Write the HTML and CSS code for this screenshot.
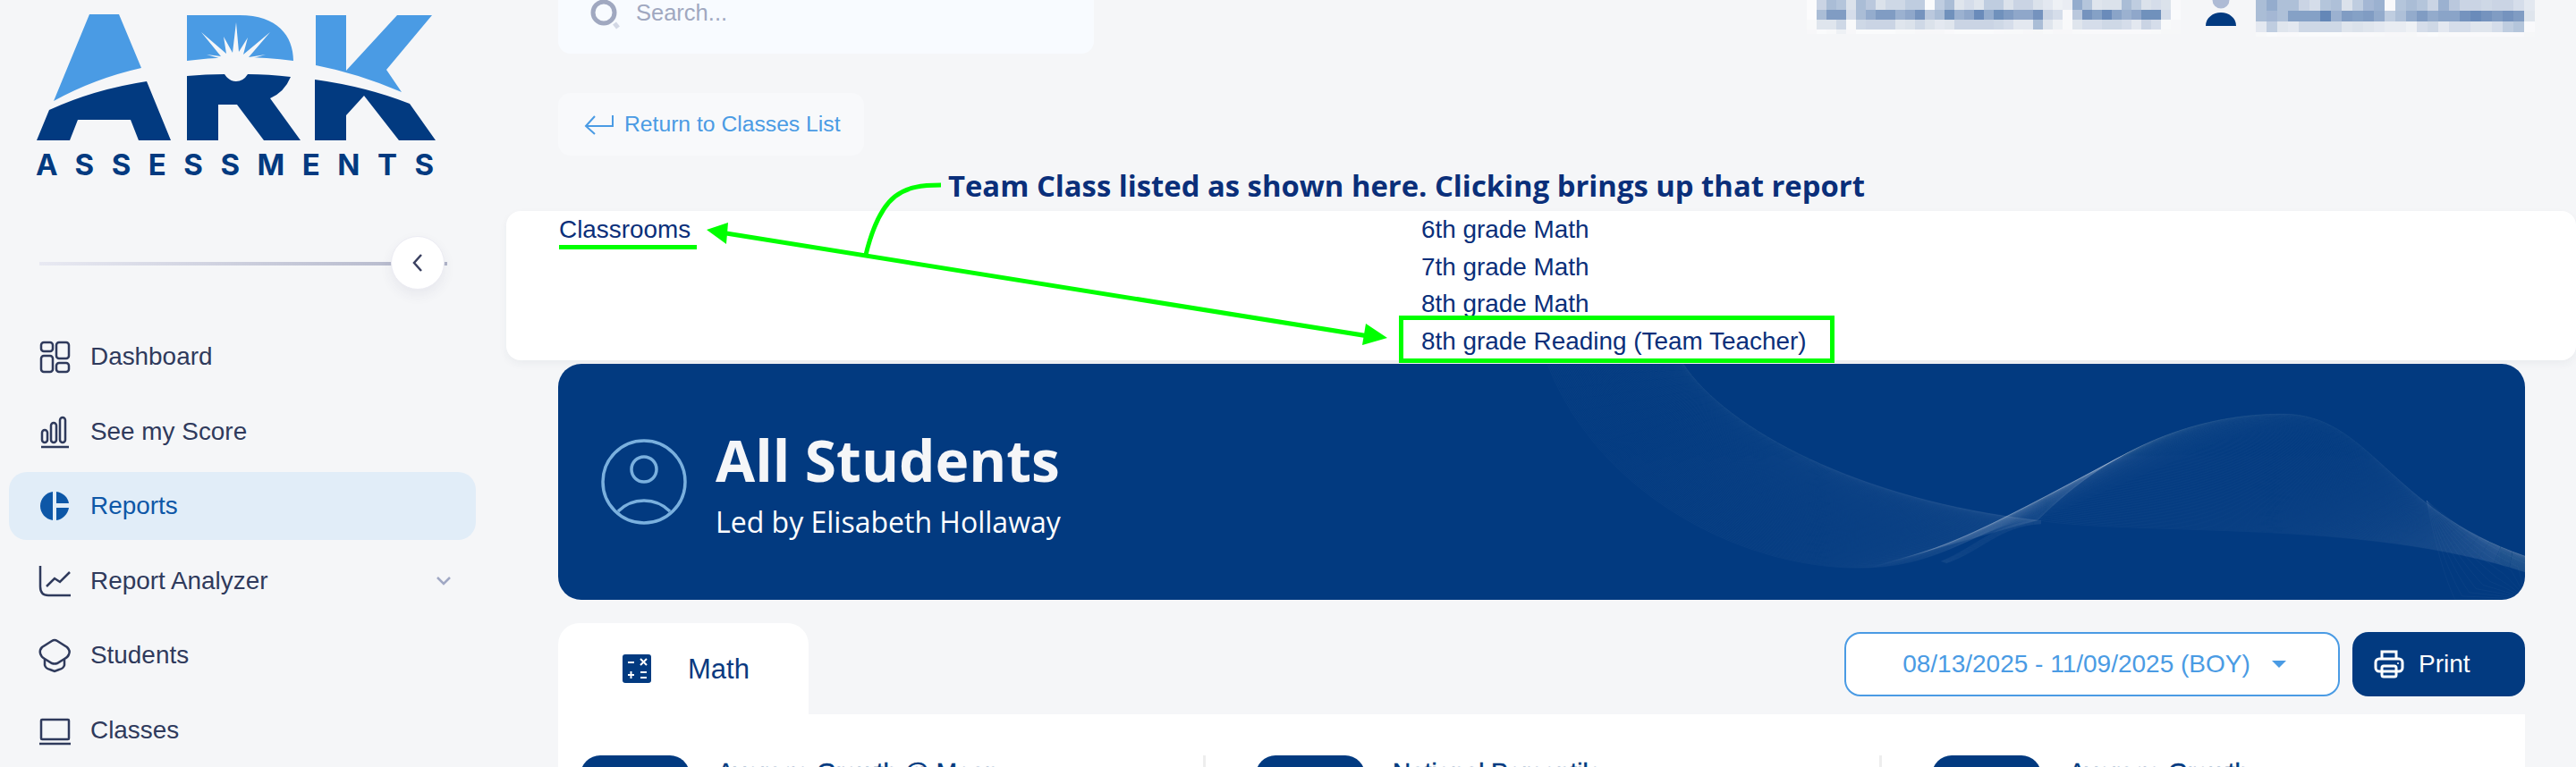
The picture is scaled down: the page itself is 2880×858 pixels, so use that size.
FILE: index.html
```html
<!DOCTYPE html>
<html lang="en">
<head>
<meta charset="utf-8">
<title>ARK Assessments - All Students</title>
<link rel="stylesheet" href="styles.css">
</head>
<body>
<div class="app">
  <aside class="sidebar">
    <svg class="logo" viewBox="0 0 500 200" width="500" height="200" role="img" aria-label="ARK Assessments">
      <g class="logo-light">
        <path d="M100 16H133L158 76Q105 88 60 113Z"/>
        <path d="M209 17H268C310 17 328 40 328 68Q268 60 209 68Z"/>
        <path d="M353 17H387V79L444 17H483L432 78L449 103Q400 82 353 73Z"/>
      </g>
      <path class="logo-rays" d="M264 25L267 58L277 42L272 61L302 36L278 64L297 61L280 66H248L231 61L247 63L225 36L253 60L250 41L260 59Z"/>
      <g class="logo-dark">
        <path d="M164 91L191 157H155L146 134H87L78 157H41L55 123Q105 100 164 91Z"/>
        <path d="M209 85Q230 83 251 83Q256 91 264 91Q272 91 277 83Q300 83 325 86Q318 103 302 110L336 157H295L265 117H244V157H209Z"/>
        <path d="M352 89Q410 97 458 116L487 157H446L407 107L387 129V157H352Z"/>
      </g>
      <text class="logo-word" x="40" y="196" textLength="445" lengthAdjust="spacing">ASSESSMENTS</text>
    </svg>

    <div class="divider">
      <button class="collapse" type="button" aria-label="Collapse">
        <svg viewBox="0 0 14 22" width="14" height="22"><path d="M11 2L3 11L11 20"/></svg>
      </button>
    </div>

    <nav class="nav">
      <a class="nav-item">
        <svg class="nav-icon" viewBox="0 0 34 36"><rect x="2" y="2" width="13" height="10" rx="3"/><rect x="19" y="2" width="14" height="18" rx="3"/><rect x="2" y="17" width="13" height="18" rx="3"/><rect x="19" y="25" width="14" height="10" rx="3"/></svg>
        <span>Dashboard</span>
      </a>
      <a class="nav-item">
        <svg class="nav-icon" viewBox="0 0 34 36"><rect x="3" y="16" width="6" height="14" rx="3"/><rect x="13" y="8" width="6" height="22" rx="3"/><rect x="23" y="2" width="6" height="28" rx="3"/><path d="M2 35H33"/></svg>
        <span>See my Score</span>
      </a>
      <a class="nav-item active">
        <svg class="nav-icon" viewBox="0 0 34 36"><path class="solid" d="M15 2V34C7 33 1 26 1 18C1 10 7 3 15 2Z"/><path class="solid" d="M19 2C26 3 32 8 33 15H19Z"/><path class="solid" d="M19 20H33C32 27 26 33 19 34Z"/></svg>
        <span>Reports</span>
      </a>
      <a class="nav-item">
        <svg class="nav-icon" viewBox="0 0 34 36"><path d="M1 1V24C1 30 4 34 10 34H35"/><path d="M8 24L17 15L23 19L34 8"/></svg>
        <span>Report Analyzer</span>
        <svg class="nav-caret" viewBox="0 0 18 11"><path d="M2 2L9 9L16 2"/></svg>
      </a>
      <a class="nav-item">
        <svg class="nav-icon" viewBox="0 0 34 36"><path d="M14 2Q17 0 20 2L31 9Q35 13 33 17Q32 20 28 22L20 27Q17 28 14 27L6 22Q2 20 1 16Q0 12 3 9Z"/><path d="M6 22V29Q7 33 12 34L17 36L22 34Q27 33 28 29V22"/></svg>
        <span>Students</span>
      </a>
      <a class="nav-item">
        <svg class="nav-icon" viewBox="0 0 34 36"><rect x="2" y="6" width="31" height="22" rx="1"/><path d="M0 33H35"/></svg>
        <span>Classes</span>
      </a>
    </nav>
  </aside>

  <main class="main">
    <header class="topbar">
      <div class="search">
        <svg class="search-icon" viewBox="0 0 34 34" width="34" height="34"><circle cx="15" cy="14" r="12"/><path class="search-handle" d="M27 26L31 31"/></svg>
        <span>Search...</span>
      </div>
      <div class="account">
        <svg class="mosaic" id="mosaic-school" width="418" height="40" aria-hidden="true"></svg>
        <svg class="user" viewBox="0 0 36 30" width="36" height="30" aria-hidden="true"><circle class="user-head" cx="18" cy="0" r="9.5"/><path class="user-body" d="M1 29C1 20 9 14 18 14C27 14 35 20 35 29Z"/></svg>
        <svg class="mosaic" id="mosaic-name" width="312" height="42" aria-hidden="true"></svg>
      </div>
    </header>

    <a class="return">
      <svg viewBox="0 0 34 24" width="34" height="24"><path d="M32 2V14H2M12 3L2 14L12 23"/></svg>
      <span>Return to Classes List</span>
    </a>

    <p class="note">Team Class listed as shown here. Clicking brings up that report</p>

    <section class="panel">
      <div class="panel-left"><a class="link">Classrooms</a></div>
      <ul class="panel-list">
        <li>6th grade Math</li>
        <li>7th grade Math</li>
        <li>8th grade Math</li>
        <li>8th grade Reading (Team Teacher)</li>
      </ul>
    </section>

    <section class="banner">
      <svg class="banner-waves" id="waves" viewBox="624 407 2199 264" preserveAspectRatio="none" aria-hidden="true"></svg>
      <svg class="banner-icon" viewBox="0 0 96 96" width="96" height="96"><circle cx="48" cy="48" r="46"/><circle cx="48" cy="34" r="14"/><path d="M19 81Q31 69 48 69Q65 69 77 81"/></svg>
      <div class="banner-text">
        <h1>All Students</h1>
        <p>Led by Elisabeth Hollaway</p>
      </div>
    </section>

    <div class="tabbar">
      <div class="tab">
        <svg viewBox="0 0 32 32" width="32" height="32"><rect class="calc-bg" width="32" height="32" rx="3"/><path class="calc-sign" d="M6 9H13M20 5L27 12M27 5L20 12M9.500 19V27M6 23H13M20 20H27M20 26H27"/></svg>
        <span>Math</span>
      </div>
      <div class="controls">
        <button class="range" type="button"><span>08/13/2025 - 11/09/2025 (BOY)</span><i class="range-caret"></i></button>
        <button class="print" type="button">
          <svg viewBox="0 0 34 32" width="34" height="32"><path d="M9 10V2H25V10"/><rect x="2" y="10" width="30" height="14" rx="4"/><rect x="9" y="18" width="16" height="12" rx="2"/><circle class="print-dot" cx="27" cy="15" r="1"/></svg>
          <span>Print</span>
        </button>
      </div>
    </div>

    <section class="card">
      <div class="stat"><div class="stat-pill"></div><h2>Average Growth @ Mean</h2></div>
      <div class="stat"><div class="stat-pill"></div><h2>National Percentile</h2></div>
      <div class="stat"><div class="stat-pill"></div><h2>Average Growth</h2></div>
    </section>
  </main>
</div>

<svg class="callouts" viewBox="0 0 2880 858" width="2880" height="858" aria-hidden="true">
  <path d="M625 276.500H779"/>
  <path d="M812 261L1530 376"/>
  <path d="M968 285C985 215 1010 207 1052 207"/>
  <rect x="1566.500" y="355.500" width="482" height="48"/>
  <polygon points="790,257 814,249 812,273"/>
  <polygon points="1551,378 1527,362 1523,386"/>
</svg>

<script src="app.js"></script>
</body>
</html>
```

FILE: styles.css
```css
* { box-sizing: border-box; }
html, body { margin: 0; height: 858px; overflow: hidden; }
body { background: #f5f6f8; font-family: "Liberation Sans", Arial, sans-serif; color: #2f3a5c; }
h1, h2, p, ul { margin: 0; padding: 0; }
button { font: inherit; border: 0; padding: 0; }

.app { display: flex; width: 2880px; height: 858px; overflow: hidden; }

/* Sidebar */
.sidebar { flex: 0 0 566px; }
.logo { display: block; }
.logo-light { fill: #4a9be4; }
.logo-dark { fill: #023a80; }
.logo-rays { fill: #f5f6f8; }
.logo-word { fill: #023a80; font-family: Inter, sans-serif; font-weight: 700; font-size: 33px; }

.divider { position: relative; width: 456px; height: 4px; margin: 93px 0 0 44px; background: linear-gradient(90deg, #e8e9f2, #b0b4c8); }
.collapse { position: absolute; right: 3px; top: -29px; width: 60px; height: 60px; display: flex; align-items: center; justify-content: center; background: #fff; border-radius: 50%; border: 1px solid #ececf3; box-shadow: 0 6px 14px rgba(60, 60, 100, .07); }
.collapse path { fill: none; stroke: #3a4060; stroke-width: 2.500; }

.nav { display: flex; flex-direction: column; gap: 7.500px; width: 522px; margin: 64px 0 0 10px; }
.nav-item { display: flex; align-items: center; gap: 23px; height: 76px; padding: 0 27px 0 34px; border-radius: 20px; font-size: 27.900px; }
.nav-item span { flex: 1; }
.nav-icon { width: 34px; height: 36px; flex: none; overflow: visible; fill: none; stroke: #2f3a5c; stroke-width: 2.500; }
.nav-icon .solid { fill: #0d57a7; stroke: none; }
.nav-caret { width: 18px; height: 11px; fill: none; stroke: #a0a8c4; stroke-width: 2.500; }
.active { background: #e1edf8; color: #0d57a7; }

/* Main column */
.main { flex: 1; min-width: 0; }
.topbar, .return, .banner, .tabbar, .card { margin-left: 58px; margin-right: 57px; }

.topbar { display: flex; justify-content: space-between; height: 60px; }
.search { display: flex; align-items: flex-start; gap: 17px; width: 599px; height: 60px; padding: 0 36px; overflow: hidden; background: #f8fbff; border-radius: 0 0 14px 14px; font-size: 25.500px; color: #a0a8c0; line-height: 29px; }
.search-icon { flex: none; fill: none; stroke: #a0a8c0; stroke-width: 5; }
.search-handle { stroke: #d3d8e5; }
.account { display: flex; align-items: flex-start; margin-right: -11px; }
.mosaic { display: block; }
.user { display: block; margin: 0 21px 0 27px; }
.user-head { fill: #aebbd5; }
.user-body { fill: #023a80; }

.return { display: flex; align-items: center; gap: 11px; width: 342px; height: 70px; margin-top: 44px; padding-left: 29px; background: #f8f9fb; border-radius: 14px; color: #4a9be4; font-size: 24.700px; }
.return svg { flex: none; fill: none; stroke: #4a9be4; stroke-width: 2; }

.note { height: 62px; padding-left: 494px; font-family: "Open Sans", sans-serif; font-weight: 700; font-size: 32.800px; line-height: 68px; color: #0a2f7a; white-space: nowrap; }

.panel { display: flex; height: 167px; background: #fff; border-radius: 16px; box-shadow: 0 4px 10px rgba(40, 50, 80, .05); color: #0a2f7a; font-size: 27.900px; line-height: 41.500px; }
.panel-left { flex: 0 0 1023px; padding-left: 59px; }
.panel-list { list-style: none; }

.banner { position: relative; display: flex; align-items: center; gap: 32px; height: 264px; margin-top: 4px; padding-left: 48px; background: #023a80; border-radius: 26px; overflow: hidden; }
.banner-waves { position: absolute; left: 0; top: 0; width: 100%; height: 100%; }
.banner-waves path { fill: none; stroke: #fff; stroke-width: 1; stroke-opacity: .032; }
.banner-icon { position: relative; flex: none; fill: none; stroke: #7ab0de; stroke-width: 3.500; }
.banner-text { position: relative; padding-top: 3px; font-family: "Open Sans", sans-serif; }
.banner-text h1 { font-size: 64px; font-weight: 700; line-height: 80px; color: #f5f6f8; }
.banner-text p { margin-top: 7px; font-size: 32px; line-height: 44px; color: #fff; }

.tabbar { display: flex; justify-content: space-between; height: 102px; margin-top: 26px; }
.tab { display: flex; align-items: center; gap: 41px; width: 280px; padding: 0 0 0 72px; background: #fff; border-radius: 24px 24px 0 0; color: #0a3a80; font-size: 31px; }
.tab svg { flex: none; }
.tab span { padding-top: 1px; }
.calc-bg { fill: #023a80; }
.calc-sign { fill: none; stroke: #fff; stroke-width: 2; }
.controls { display: flex; gap: 14px; padding-top: 10px; }
.range { display: flex; align-items: center; justify-content: center; gap: 24px; width: 554px; height: 72px; padding-left: 5px; background: #fff; border: 2px solid #4a9be4; border-radius: 18px; color: #4a9be4; font-size: 28px; }
.range-caret { width: 0; height: 0; border-left: 8px solid transparent; border-right: 8px solid transparent; border-top: 8px solid #4a9be4; }
.print { display: flex; align-items: center; gap: 16px; width: 193px; height: 72px; padding-left: 24px; background: #023a80; border-radius: 18px; color: #fff; font-size: 28px; }
.print svg { flex: none; fill: none; stroke: #fff; stroke-width: 3; }
.print .print-dot { fill: #fff; stroke: none; }

.card { display: grid; grid-template-columns: 696px 756px 1fr; height: 59px; padding: 46px 0 0 25px; overflow: hidden; background: #fff; }
.stat { display: flex; gap: 31px; height: 60px; }
.stat + .stat { border-left: 3px solid #eee; padding-left: 56px; }
.stat-pill { flex: none; width: 122px; height: 60px; background: #023a80; border-radius: 22px 22px 0 0; }
.stat h2 { font-size: 27.900px; font-weight: 400; line-height: 32px; margin-top: 3px; color: #023a80; -webkit-text-stroke: .5px #023a80; white-space: nowrap; }

/* Green annotations drawn over the page */
.callouts { position: absolute; left: 0; top: 0; pointer-events: none; fill: none; stroke: #00ff00; stroke-width: 5; }
.callouts polygon { fill: #00ff00; stroke: none; }
```

FILE: app.js
```js
// Banner ribbon: lines interpolated between two edge curves.
(function () {
  var svg = document.getElementById('waves');
  var NS = 'http://www.w3.org/2000/svg';
  var a = [1882,407, 1930,480, 2080,560, 2278,582, 2370,490, 2470,463, 2552,463, 2650,463, 2670,570, 2823,622];
  var b = [1730,407, 1790,560, 1960,640, 2089,635, 2180,632, 2220,582, 2278,582, 2400,600, 2640,580, 2823,640];
  var c = [2713,560, 2725,620, 2735,650, 2745,671, 2770,671, 2790,671, 2810,671, 2815,671, 2820,671, 2823,671];
  var d = [2713,560, 2760,600, 2800,620, 2823,630, 2823,640, 2823,650, 2823,660, 2823,664, 2823,668, 2823,671];
  var e = [2170,628, 2210,612, 2230,584, 2282,582];
  var f = [2176,630, 2216,616, 2236,588, 2282,586];
  function draw(p, q, n, op, bunch) {
    for (var i = 0; i <= n; i++) {
      var t = Math.pow(i / n, bunch || 1), v = p.map(function (x, k) { return x + (q[k] - x) * t; });
      var el = document.createElementNS(NS, 'path');
      el.setAttribute('d', 'M' + v[0] + ' ' + v[1] + 'C' + v.slice(2).join(' '));
      if (op) el.setAttribute('stroke-opacity', op);
      svg.appendChild(el);
    }
  }
  draw(a, b, 120, null, 1.4);
  draw(c, d, 10, .012);
  draw(e, f, 10, .05);
})();

// Blurred account labels: rows of square cells, digit = darkness.
(function () {
  var NS = 'http://www.w3.org/2000/svg';
  function mosaic(id, cell, rows) {
    var svg = document.getElementById(id);
    rows.forEach(function (row) {
      row.v.forEach(function (o, i) {
        var r = document.createElementNS(NS, 'rect');
        r.setAttribute('x', i * cell);
        r.setAttribute('y', row.y);
        r.setAttribute('width', cell);
        r.setAttribute('height', row.h);
        r.setAttribute('fill', o < 0 ? '#fff' : '#1f5298');
        r.setAttribute('fill-opacity', o < 0 ? -o : o);
        svg.appendChild(r);
      });
    });
  }
  mosaic('mosaic-school', 11, [
    { y: 0, h: 11, v: [-.6,.2,.35,.3,.12,.35,.28,.12,.18,.18,.25,.25,-.5,.25,.35,.1,.15,.1,.25,.25,.12,.2,.2,.12,.08,.03,.05,.45,.3,.1,.12,.12,.35,.25,.12,.15,.12,-.4] },
    { y: 11, h: 11, v: [-.7,.35,.55,.55,.15,.35,.45,.55,.55,.42,.48,.6,.28,.35,.62,.42,.48,.65,.45,.62,.55,.48,.48,.6,.2,.15,-.4,.28,.6,.52,.65,.5,.42,.48,.62,.62,.15,-.5] },
    { y: 22, h: 11, v: [-.3,.1,.1,.18,-.3,.18,.2,.2,.2,.1,.12,.18,.12,.08,.1,.2,.2,.2,.2,.18,.15,.08,.08,.35,.1,.03,-.3,.1,.15,.15,.18,.18,.15,.08,.2,.15,-.3,-.2] },
    { y: 33, h: 5, v: [-.2,-.5,-.3,.03,-.2,-.5,-.5,-.5,-.5,-.3,-.3,-.2,-.2,-.2,-.4,-.5,-.5,-.5,-.5,-.4,-.3,-.3,-.2,-.1,-.3,-.2,-.2,-.3,-.4,-.4,-.4,-.4,-.4,-.4,-.4,-.3,-.1,-.1] }
  ]);
  mosaic('mosaic-name', 12, [
    { y: 0, h: 12, v: [.35,.45,.33,.33,.2,.15,.3,.33,.12,.25,.38,.42,-.4,.3,.35,.3,.2,.42,.28,.2,.2,.18,.2,.2,.15,.08] },
    { y: 12, h: 12, v: [.35,.38,.33,.52,.52,.52,.68,.42,.55,.52,.55,.46,.25,.33,.46,.55,.46,.5,.5,.6,.65,.6,.55,.6,.55,.1] },
    { y: 24, h: 12, v: [.08,.25,.1,.08,.18,.18,.18,.18,.1,.12,.1,.08,.06,.06,.03,.15,.18,.08,.15,.15,.1,.1,.15,.25,.3,-.4] },
    { y: 36, h: 5, v: [-.3,-.5,-.4,-.4,-.5,-.5,-.5,-.5,-.4,-.4,-.4,-.3,-.2,-.2,-.1,-.4,-.5,-.3,-.4,-.4,-.4,-.4,-.4,-.4,-.4,-.1] }
  ]);
})();
```
